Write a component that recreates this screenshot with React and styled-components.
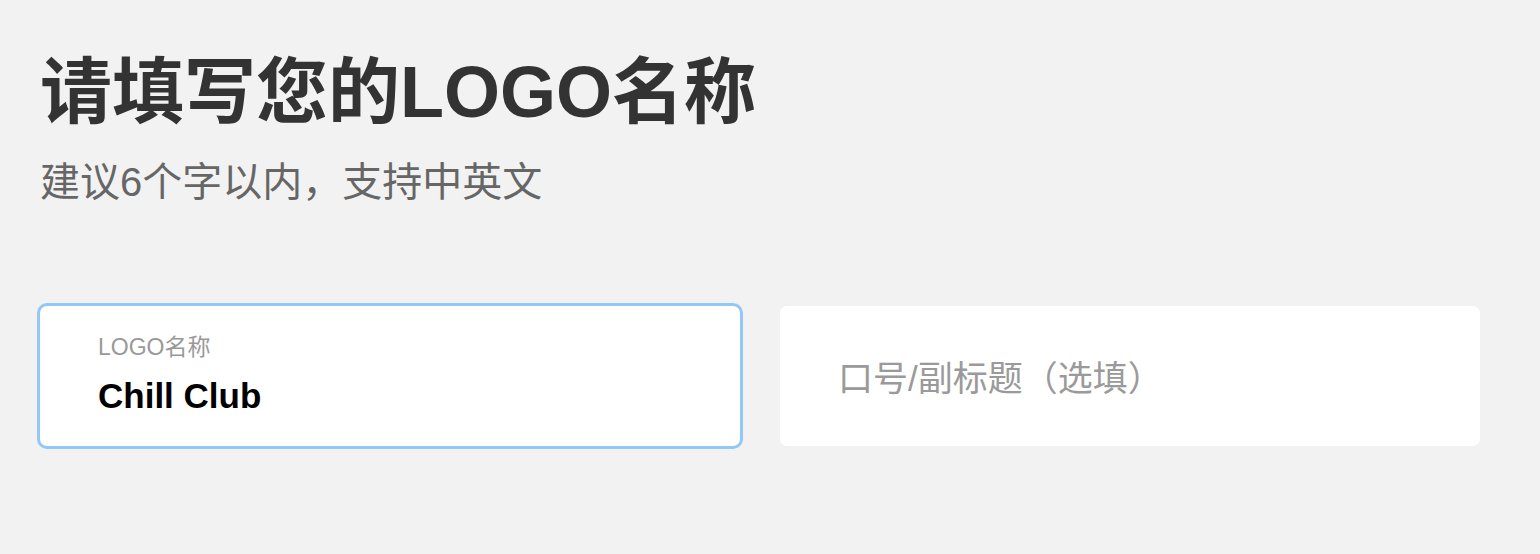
import React from "react";
import styled, { createGlobalStyle } from "styled-components";

const GlobalStyle = createGlobalStyle`
  html, body {
    margin: 0;
    padding: 0;
    background: #f2f2f2;
  }
  body {
    font-family: "Liberation Sans", "Noto Sans CJK SC", sans-serif;
  }
`;

const Page = styled.section`
  padding: 56px 40px 0;
  min-height: 554px;
  box-sizing: border-box;
`;

const Heading = styled.h1`
  margin: 0;
  font-size: 72px;
  line-height: 72px;
  font-weight: 700;
  color: #333333;
`;

const Hint = styled.p`
  margin: 34px 0 0;
  font-size: 40px;
  line-height: 40px;
  color: #666666;
`;

const Fields = styled.div`
  display: grid;
  grid-template-columns: 700px 700px;
  gap: 40px;
  margin-top: 104px;
`;

const Field = styled.div`
  height: 140px;
  box-sizing: border-box;
  background: #ffffff;
  border-radius: 7px;
  padding: 0 58px;
  display: flex;
  flex-direction: column;
  justify-content: ${(p) => (p.$filled ? "flex-start" : "center")};
  padding-top: ${(p) => (p.$filled ? "30px" : "5px")};
  box-shadow: ${(p) => (p.$focused ? "0 0 0 3px #93c8f5" : "none")};
`;

const FieldLabel = styled.span`
  font-size: 23px;
  line-height: 23px;
  color: #999999;
`;

const FieldValue = styled.span`
  margin-top: 19px;
  font-size: 35px;
  line-height: 35px;
  font-weight: 700;
  color: #000000;
`;

const Placeholder = styled.span`
  font-size: 35px;
  line-height: 35px;
  color: #9a9a9a;
`;

export default function App() {
  return (
    <>
      <GlobalStyle />
      <Page>
        <Heading>请填写您的LOGO名称</Heading>
        <Hint>建议6个字以内，支持中英文</Hint>
        <Fields>
          <Field $filled $focused>
            <FieldLabel>LOGO名称</FieldLabel>
            <FieldValue>Chill Club</FieldValue>
          </Field>
          <Field>
            <Placeholder>口号/副标题（选填）</Placeholder>
          </Field>
        </Fields>
      </Page>
    </>
  );
}
